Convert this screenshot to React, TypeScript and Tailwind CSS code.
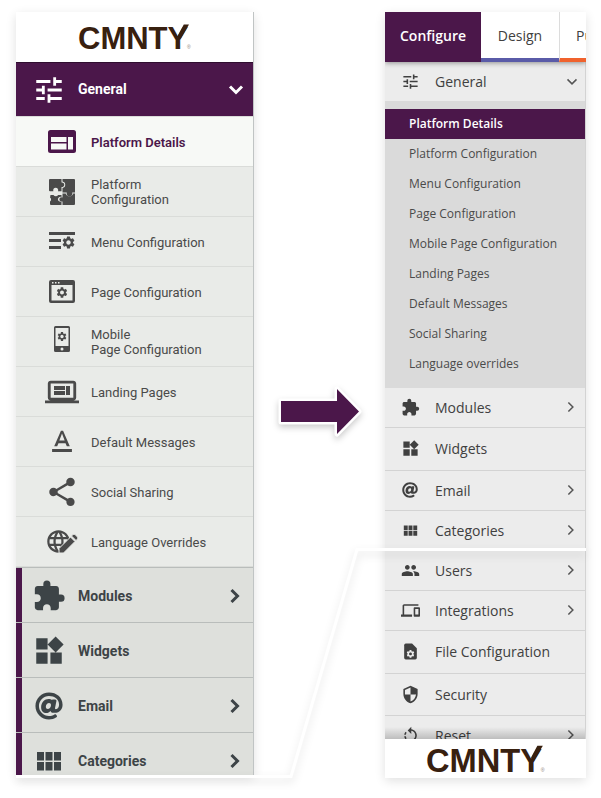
import React from 'react'
import { FaAt } from 'react-icons/fa'
import {
  MdDevices,
  MdExtension,
  MdLanguage,
  MdLaptop,
  MdPeople,
  MdRotateLeft,
  MdSecurity,
  MdSettings,
  MdShare,
  MdTextFormat,
  MdTune,
  MdWidgets,
} from 'react-icons/md'

interface IconProps {
  className?: string
}

interface ItemProps {
  label: React.ReactNode
  icon?: React.ReactNode
  active?: boolean
  arrow?: boolean
  className?: string
}

const WebIcon: React.FC<IconProps> = ({ className }) => (
  <svg viewBox="0 0 34 34" className={className} fill="currentColor" aria-hidden="true">
    <path
      fillRule="evenodd"
      d="M5.500 5h23A2.500 2.500 0 0 1 31 7.500v18a2.500 2.500 0 0 1-2.500 2.500h-23A2.500 2.500 0 0 1 3 25.500v-18A2.500 2.500 0 0 1 5.500 5zM6 12v5h15.500v-5zM6 18.500v6h15.500v-6zM23 12v12.500h5V12z"
    />
  </svg>
)

const PuzzleIcon: React.FC<IconProps> = ({ className }) => (
  <svg viewBox="0 0 28 28" className={className} fill="currentColor" aria-hidden="true">
    <path d="M2 1h11.500v3.500a2.300 2.300 0 1 1 0 4.500v4.200H10a2.500 2.500 0 1 0-4.600 0H2a1 1 0 0 1-1-1V2a1 1 0 0 1 1-1z" />
    <path d="M14.500 1H26a1 1 0 0 1 1 1v12.500h-2.800a2.900 2.900 0 1 1-5.400 0h-4.300v-4.500a3.300 3.300 0 0 0 0-6.500z" />
    <path d="M2.500 17h3a2.700 2.700 0 0 0 4.600 0h3.400v2a2.500 2.500 0 1 0 0 4.500V27H3a1 1 0 0 1-1-1v-2.500a2.400 2.400 0 0 0 0-4z" />
    <path d="M14.500 15.500h3.200a3.900 3.900 0 0 0 7.500 0H27V26a1 1 0 0 1-1 1H14.500v-3.600a2.200 2.200 0 1 1 0-4z" />
  </svg>
)

const MenuGearIcon: React.FC<IconProps> = ({ className }) => (
  <svg viewBox="0 0 34 34" className={className} fill="currentColor" aria-hidden="true">
    <path d="M4 7h26v3H4zM4 14h12v3H4zM4 21h12v3H4z" />
    <MdSettings x="16" y="10" size={15} />
  </svg>
)

const PageGearIcon: React.FC<IconProps> = ({ className }) => (
  <svg viewBox="0 0 34 34" className={className} fill="currentColor" aria-hidden="true">
    <path
      fillRule="evenodd"
      d="M6 5h22a2 2 0 0 1 2 2v19a2 2 0 0 1-2 2H6a2 2 0 0 1-2-2V7a2 2 0 0 1 2-2zm.5 5v15.500h21V10zM7 7v1.500h1.500V7zm3 0v1.500h1.500V7zm3 0v1.500h1.500V7z"
    />
    <MdSettings x="10.500" y="11" size={13} />
  </svg>
)

const MobileGearIcon: React.FC<IconProps> = ({ className }) => (
  <svg viewBox="0 0 34 34" className={className} fill="currentColor" aria-hidden="true">
    <path
      fillRule="evenodd"
      d="M10.500 1h13A1.500 1.500 0 0 1 25 2.500v23a1.500 1.500 0 0 1-1.500 1.500h-13A1.500 1.500 0 0 1 9 25.500v-23A1.500 1.500 0 0 1 10.500 1zm0 2v18h13V3zM17 22.500a1.500 1.500 0 1 0 0 3 1.500 1.500 0 0 0 0-3z"
    />
    <MdSettings x="11.500" y="6" size={11} />
  </svg>
)

const LaptopIcon: React.FC<IconProps> = ({ className }) => (
  <svg viewBox="0 0 34 34" className={className} fill="currentColor" aria-hidden="true">
    <MdLaptop size={34} />
    <path d="M9 11h11v4H9zM9 16h11v4H9zM21 11h4v9h-4z" />
  </svg>
)

const GlobePenIcon: React.FC<IconProps> = ({ className }) => (
  <svg viewBox="0 0 34 34" className={className} fill="currentColor" aria-hidden="true">
    <MdLanguage x="0" y="3" size={27} />
    <path
      d="M14 23.500 25.500 12l4.500 4.500L18.500 28H14zM26.500 11l1.500-1.500q1-1 2 0l2.500 2.500q1 1 0 2L31 15.500z"
      stroke="#e9ebe8"
      strokeWidth="1"
    />
  </svg>
)

const GridIcon: React.FC<IconProps> = ({ className }) => (
  <svg viewBox="0 0 34 34" className={className} fill="currentColor" aria-hidden="true">
    <path d="M5 8h7v8.500H5zM13.500 8h7v8.500h-7zM22 8h7v8.500h-7zM5 18h7v8.500H5zM13.500 18h7v8.500h-7zM22 18h7v8.500h-7z" />
  </svg>
)

const FileGearIcon: React.FC<IconProps> = ({ className }) => (
  <svg viewBox="0 0 24 24" className={className} fill="currentColor" aria-hidden="true">
    <path d="M14 2H6a2 2 0 0 0-2 2v16a2 2 0 0 0 2 2h12a2 2 0 0 0 2-2V8z" />
    <MdSettings x="6" y="9" size={12} color="#ececec" />
  </svg>
)

const Chevron: React.FC<IconProps> = ({ className }) => (
  <svg viewBox="0 0 16 16" className={className} fill="none" stroke="currentColor" aria-hidden="true">
    <path d="M4.500 2l6 6-6 6" />
  </svg>
)

const Logo: React.FC<IconProps> = ({ className }) => (
  <svg viewBox="0 0 114 34" className={className} fill="#38200f" role="img" aria-label="CMNTY">
    <text x="0" y="29" fontFamily="Liberation Sans, sans-serif" fontWeight="700" fontSize="31">
      CMNTY
    </text>
    {/* raised arm of the Y */}
    <path d="M99.800 15.500L105.800 4.500H111L102.500 19z" />
    <text x="109" y="29" fontFamily="Liberation Sans, sans-serif" fontSize="5" fill="#8b7d75">
      ®
    </text>
  </svg>
)

const OldSubItem: React.FC<ItemProps> = ({ label, icon, active }) => (
  <li>
    <a
      href="#"
      className={`flex h-[50px] items-center gap-[11px] border-b border-[#dadcd9] pl-7 text-[13px] leading-[15px] ${
        active ? 'bg-[#f7f9f6] font-semibold text-[#4b174a]' : 'bg-[#e9ebe8] text-[#4a4a4a]'
      }`}
    >
      <span className="flex w-9 justify-center">{icon}</span>
      <span className="pt-px">{label}</span>
    </a>
  </li>
)

const OldItem: React.FC<ItemProps> = ({ label, icon, arrow, className = 'h-[55px]' }) => (
  <li className={`overflow-hidden border-t border-[#b9bdbb] bg-[#dee0dc] ${className}`}>
    <a
      href="#"
      className="flex h-[55px] items-center gap-[11px] border-l-6 border-[#4b174a] pr-[10px] pl-[9px] text-[14px] font-bold text-[#3d4447]"
    >
      <span className="flex w-9 justify-center">{icon}</span>
      <span className="flex-1 pt-0.5">{label}</span>
      {arrow && <Chevron className="size-4 stroke-3" />}
    </a>
  </li>
)

const NewSubItem: React.FC<ItemProps> = ({ label, active }) => (
  <li>
    <a
      href="#"
      className={`flex h-[30px] items-center pl-6 text-[12px] whitespace-nowrap ${
        active ? 'bg-[#4b174a] font-semibold text-white' : 'text-[#4a4a4a]'
      }`}
    >
      {label}
    </a>
  </li>
)

const NewItem: React.FC<ItemProps> = ({ label, icon, arrow, className = 'h-10' }) => (
  <li className="border-b border-[#d3d3d3] last:border-b-0">
    <a
      href="#"
      className={`-mb-px flex items-center gap-[15px] pr-2 pb-0.5 pl-[15px] text-[14px] text-[#404040] ${className}`}
    >
      <span className="flex w-5 justify-center">{icon}</span>
      <span className="flex-1 whitespace-nowrap">{label}</span>
      {arrow && <Chevron className="size-3 stroke-2 text-[#555]" />}
    </a>
  </li>
)

const OldSidebar: React.FC = () => (
  <nav
    aria-label="Old menu"
    className="mb-[3px] self-start border-r border-[#c0c4c4] bg-white font-[Roboto,sans-serif] shadow-[0_3px_10px_rgba(0,0,0,0.12)]"
  >
    <div className="flex h-[50px] items-center justify-center">
      <Logo className="h-[34px] w-[114px]" />
    </div>
    <button
      type="button"
      className="flex h-[55px] w-full items-center gap-[11px] border-y border-t-[#2f0d2f] border-b-[#dadcd9] bg-[#4b174a] pr-[9px] pl-[15px] text-left text-[14px] font-bold text-white"
    >
      <span className="flex w-9 justify-center">
        <MdTune className="size-[34px]" />
      </span>
      <span className="flex-1">General</span>
      <Chevron className="size-4 rotate-90 stroke-3" />
    </button>
    <ul>
      <OldSubItem active icon={<WebIcon className="size-[34px]" />} label="Platform Details" />
      <OldSubItem
        icon={<PuzzleIcon className="size-7" />}
        label={
          <>
            Platform
            <br />
            Configuration
          </>
        }
      />
      <OldSubItem icon={<MenuGearIcon className="size-[34px]" />} label="Menu Configuration" />
      <OldSubItem icon={<PageGearIcon className="size-[34px]" />} label="Page Configuration" />
      <OldSubItem
        icon={<MobileGearIcon className="size-[34px]" />}
        label={
          <>
            Mobile
            <br />
            Page Configuration
          </>
        }
      />
      <OldSubItem icon={<LaptopIcon className="size-[34px]" />} label="Landing Pages" />
      <OldSubItem icon={<MdTextFormat className="size-[34px]" />} label="Default Messages" />
      <OldSubItem icon={<MdShare className="size-[34px]" />} label="Social Sharing" />
      <OldSubItem icon={<GlobePenIcon className="size-[34px]" />} label="Language Overrides" />
    </ul>
    <ul>
      <OldItem arrow icon={<MdExtension className="size-[34px]" />} label="Modules" />
      <OldItem icon={<MdWidgets className="size-[34px]" />} label="Widgets" />
      <OldItem arrow icon={<FaAt className="size-7" />} label="Email" />
      <OldItem arrow className="h-[43px]" icon={<GridIcon className="size-[34px]" />} label="Categories" />
    </ul>
  </nav>
)

const NewSidebar: React.FC = () => (
  <nav
    aria-label="New menu"
    className="self-start overflow-hidden bg-[#ececec] font-[Open_Sans,sans-serif] shadow-[0_3px_10px_rgba(0,0,0,0.12)]"
  >
    <div className="relative flex h-[50px] bg-white text-[14px] whitespace-nowrap text-[#404040] shadow-[0_1px_5px_rgba(0,0,0,0.4)]">
      <a href="#" className="flex w-24 shrink-0 items-center justify-center bg-[#4b174a] pb-1 font-semibold text-white">
        Configure
      </a>
      <a href="#" className="flex w-[78px] shrink-0 items-center justify-center border-b-4 border-[#5a5ba8]">
        Design
      </a>
      <a
        href="#"
        className="flex flex-1 items-center overflow-hidden border-b-4 border-l border-b-[#f0622d] border-l-[#dcdcdc] pl-4"
      >
        Publish
      </a>
    </div>
    <div className="border-r border-[#d3d3d3]">
      <button
        type="button"
        className="flex h-[39px] w-full items-center gap-[15px] pr-[7px] pl-[15px] text-left text-[14px] text-[#404040]"
      >
        <span className="flex w-5 justify-center">
          <MdTune className="size-[19px]" />
        </span>
        <span className="flex-1">General</span>
        <Chevron className="size-3 rotate-90 stroke-2 text-[#555]" />
      </button>
      <ul className="bg-[#dadada] pt-2 pb-[9px]">
        <NewSubItem active label="Platform Details" />
        <NewSubItem label="Platform Configuration" />
        <NewSubItem label="Menu Configuration" />
        <NewSubItem label="Page Configuration" />
        <NewSubItem label="Mobile Page Configuration" />
        <NewSubItem label="Landing Pages" />
        <NewSubItem label="Default Messages" />
        <NewSubItem label="Social Sharing" />
        <NewSubItem label="Language overrides" />
      </ul>
      <div className="relative h-[351px] overflow-hidden">
        <ul>
          <NewItem arrow icon={<MdExtension className="size-[19px]" />} label="Modules" />
          <NewItem className="h-[43px]" icon={<MdWidgets className="size-[19px]" />} label="Widgets" />
          <NewItem arrow icon={<FaAt className="size-4" />} label="Email" />
          <NewItem arrow icon={<GridIcon className="size-[19px]" />} label="Categories" />
          <NewItem arrow icon={<MdPeople className="size-[19px]" />} label="Users" />
          <NewItem arrow icon={<MdDevices className="size-[19px]" />} label="Integrations" />
          <NewItem className="h-[43px]" icon={<FileGearIcon className="size-[19px]" />} label="File Configuration" />
          <NewItem className="h-[42px]" icon={<MdSecurity className="size-[19px]" />} label="Security" />
          <NewItem arrow icon={<MdRotateLeft className="size-[19px]" />} label="Reset" />
        </ul>
        <div className="pointer-events-none absolute inset-x-0 bottom-0 h-3 bg-linear-to-t from-black/20 to-transparent" />
      </div>
    </div>
    <div className="flex h-[39px] items-center justify-center bg-white">
      <Logo className="h-9 w-[120px]" />
    </div>
  </nav>
)

export default function App() {
  return (
    <main className="bg-white pt-3 pr-[15px] pb-5 pl-4">
      <div className="relative grid grid-cols-[238fr_131fr_201fr]">
        <OldSidebar />
        <div className="flex justify-center pt-[374px] pr-1">
          <svg viewBox="0 0 90 56" className="h-14 w-[90px] drop-shadow-[0_3px_3px_rgba(0,0,0,0.2)]" aria-hidden="true">
            <path
              d="M8 15h56V3l22 22.500L64 48V36H8z"
              fill="#4b174a"
              stroke="#fff"
              strokeWidth="5"
              strokeLinejoin="round"
              paintOrder="stroke"
            />
          </svg>
        </div>
        <NewSidebar />
        {/* fold line running between the two menus */}
        <svg
          viewBox="0 0 570 766"
          preserveAspectRatio="none"
          className="pointer-events-none absolute inset-0 size-full overflow-visible drop-shadow-[0_4px_4px_rgba(0,0,0,0.12)]"
          aria-hidden="true"
        >
          <path d="M0 764.500h275l66-227h229" fill="none" stroke="#fff" strokeWidth="3" />
        </svg>
      </div>
    </main>
  )
}
